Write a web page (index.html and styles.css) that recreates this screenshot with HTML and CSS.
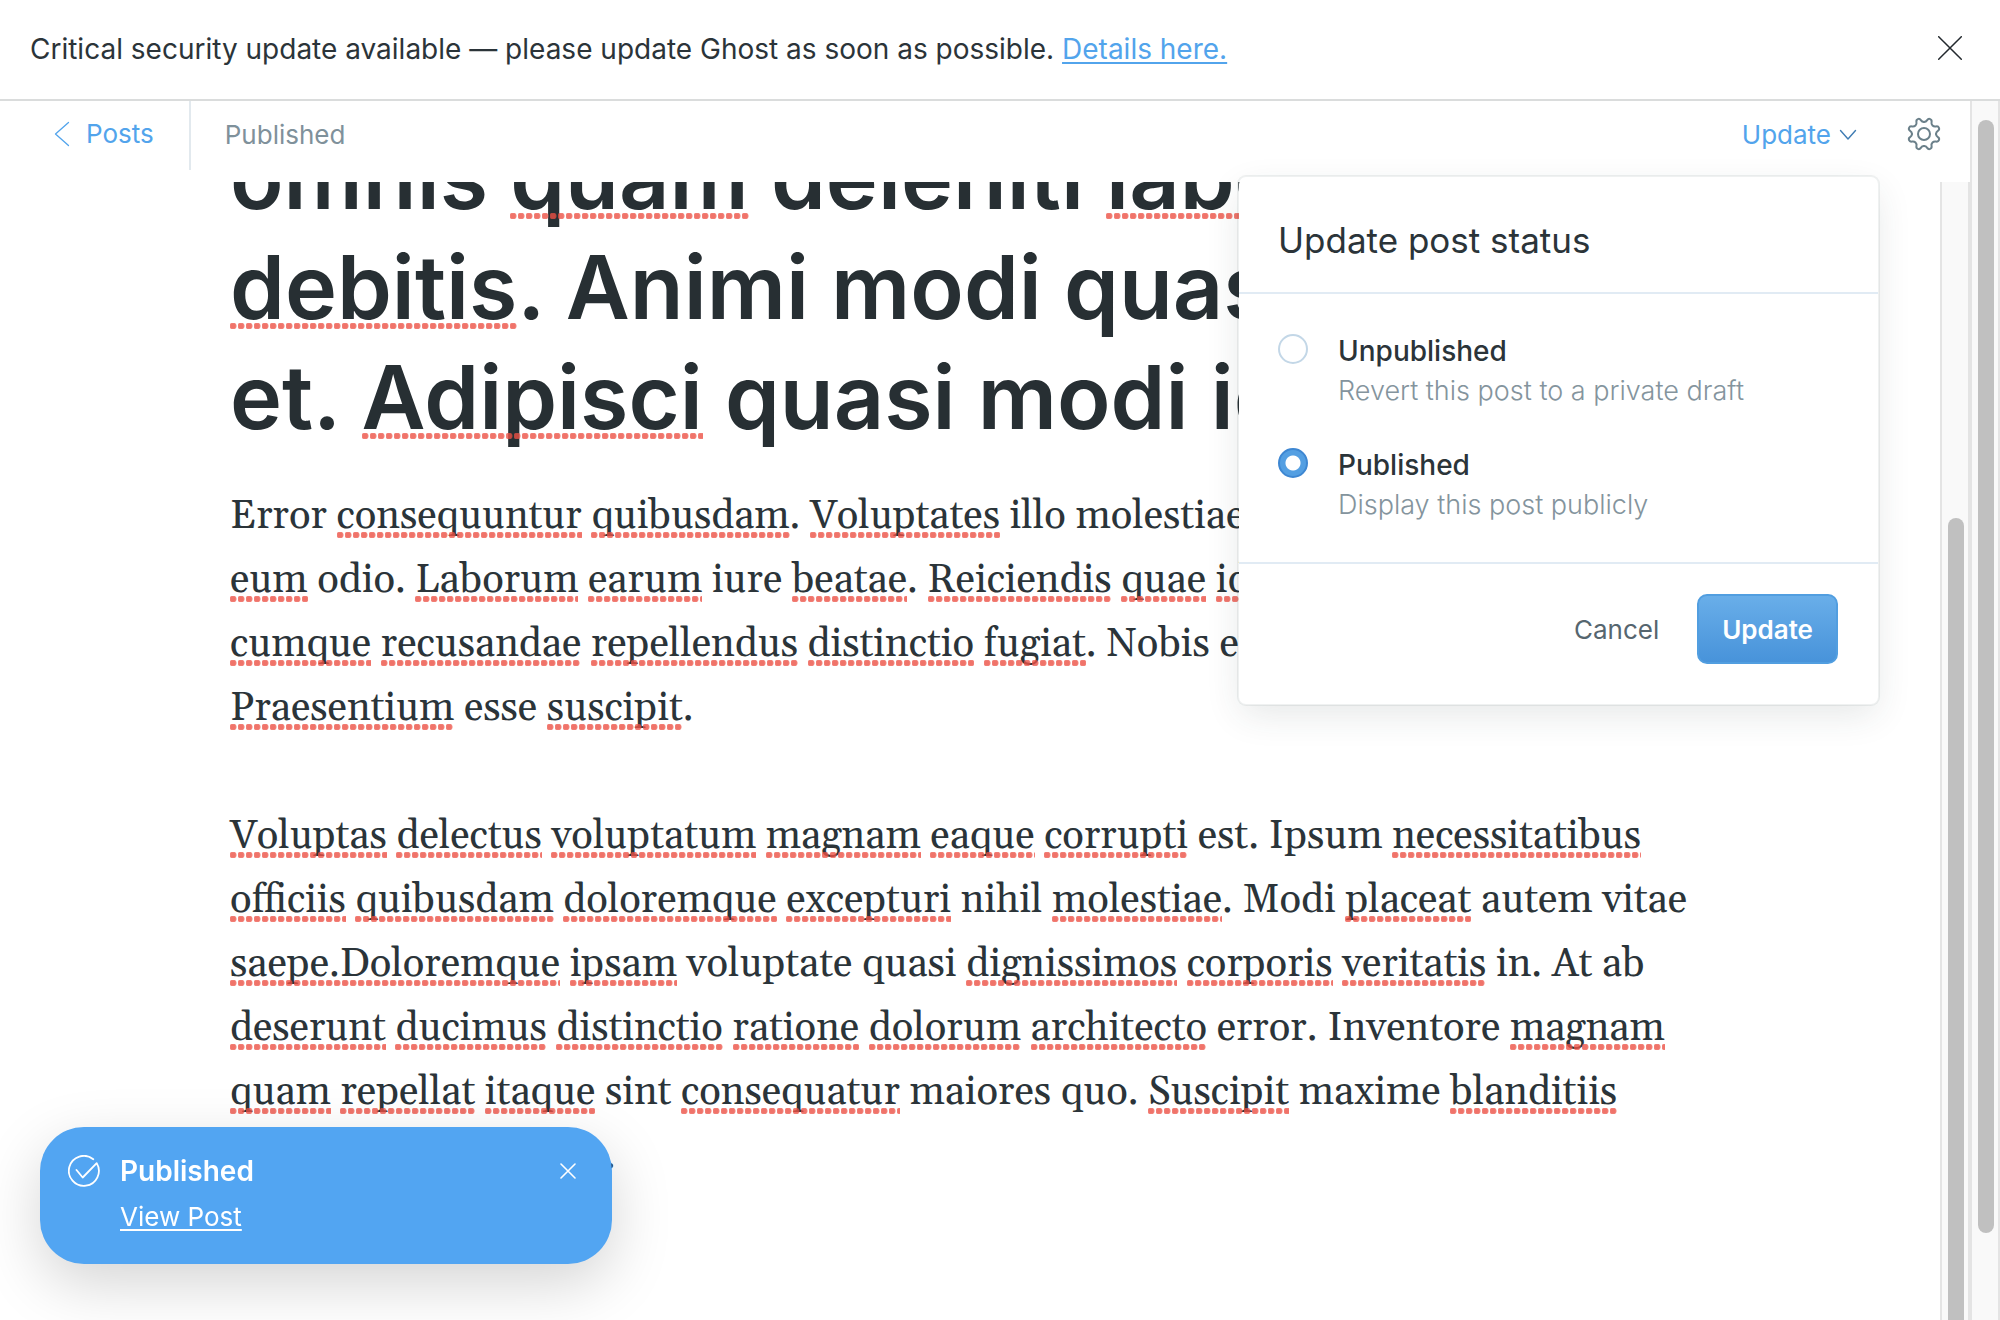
FILE: index.html
```html
<!DOCTYPE html>
<html lang="en">
<head>
<meta charset="utf-8">
<meta name="viewport" content="width=device-width, initial-scale=1">
<title>Editor - Ghost</title>
<link rel="stylesheet" href="styles.css">
</head>
<body>
<aside class="alert" role="alert">
  <p class="alert-text">Critical security update available — please update Ghost as soon as possible. <a href="#details">Details here.</a></p>
  <button class="icon-button" type="button" aria-label="Close">
    <svg width="24" height="24" viewBox="0 0 24 24" fill="none" stroke="#23292e" stroke-width="1.5" stroke-linecap="round"><path d="M.7.7l22.6 22.6M23.3.7L.7 23.3"/></svg>
  </button>
</aside>

<div class="app">
  <main class="screen">
    <header class="toolbar">
      <a class="back" href="#posts">
        <svg width="16" height="26" viewBox="0 0 16 26" fill="none" stroke="#52a4ec" stroke-width="1.3" stroke-linecap="round" stroke-linejoin="round"><path d="M14.500 1.500L1.500 13l13 11.500"/></svg>
        Posts
      </a>
      <span class="status">Published</span>
      <button class="update-trigger" type="button" aria-expanded="true">
        Update
        <svg width="18" height="12" viewBox="0 0 18 12" fill="none" stroke="#3f7cb3" stroke-width="1.4" stroke-linecap="round" stroke-linejoin="round"><path d="M1.500 1.500l7.500 8.500 7.500-8.500"/></svg>
      </button>
      <button class="icon-button" type="button" aria-label="Settings">
        <svg width="34" height="34" viewBox="-17 -17 34 34" fill="none" stroke="#6b808a" stroke-width="2" stroke-linecap="round">
          <circle r="6"/>
          <path id="q" d="M12.030 0Q12.030 2.010 13.870 3.190Q15.710 4.360 14.950 6.200Q14.190 8.030 12.060 7.560Q9.930 7.080 8.510 8.510Q7.080 9.930 7.560 12.060Q8.030 14.190 6.200 14.950Q4.360 15.710 3.190 13.870Q2.010 12.030 0 12.030"/>
          <use href="#q" transform="rotate(90)"/>
          <use href="#q" transform="rotate(180)"/>
          <use href="#q" transform="rotate(270)"/>
        </svg>
      </button>
    </header>

    <div class="editor">
      <article class="post" contenteditable="true" spellcheck="false">
        <h1>omnis <i>quam</i> deleniti <i>laborum</i><br><i>debitis</i>. Animi modi quasi<br>et. <i>Adipisci</i> quasi modi id</h1>
        <p>Error <i>consequuntur</i> <i>quibusdam</i>. <i>Voluptates</i> illo molestiae<br><i>eum</i> odio. <i>Laborum</i> <i>earum</i> iure <i>beatae</i>. <i>Reiciendis</i> <i>quae</i> <i>id</i><br><i>cumque</i> <i>recusandae</i> <i>repellendus</i> <i>distinctio</i> <i>fugiat</i>. Nobis et<br><i>Praesentium</i> esse <i>suscipit</i>.</p>
        <p><i>Voluptas</i> <i>delectus</i> <i>voluptatum</i> <i>magnam</i> <i>eaque</i> <i>corrupti</i> est. Ipsum <i>necessitatibus</i><br><i>officiis</i> <i>quibusdam</i> <i>doloremque</i> <i>excepturi</i> nihil <i>molestiae</i>. Modi <i>placeat</i> autem vitae<br><i>saepe.Doloremque</i> <i>ipsam</i> voluptate quasi <i>dignissimos</i> <i>corporis</i> <i>veritatis</i> in. At ab<br><i>deserunt</i> <i>ducimus</i> <i>distinctio</i> <i>ratione</i> <i>dolorum</i> <i>architecto</i> error. Inventore <i>magnam</i><br><i>quam</i> <i>repellat</i> <i>itaque</i> sint <i>consequatur</i> maiores quo. <i>Suscipit</i> maxime <i>blanditiis</i><br>dolor illam maiores a.</p>
      </article>
      <div class="scrollbar inner"><div class="thumb"></div></div>
    </div>

    <form class="popup">
      <h2>Update post status</h2>
      <div class="options">
        <div class="option">
          <input type="radio" name="status" id="unpublished">
          <label for="unpublished">Unpublished<small>Revert this post to a private draft</small></label>
        </div>
        <div class="option">
          <input type="radio" name="status" id="published" checked>
          <label for="published">Published<small>Display this post publicly</small></label>
        </div>
      </div>
      <footer>
        <button class="cancel" type="button">Cancel</button>
        <button class="submit" type="button">Update</button>
      </footer>
    </form>
  </main>
  <div class="scrollbar outer"><div class="thumb"></div></div>
</div>

<section class="toast" role="status">
  <svg width="32" height="32" viewBox="0 0 32 32" fill="none" stroke="#fff" stroke-width="1.8" stroke-linecap="round" stroke-linejoin="round"><path d="M8.500 15l6.200 7.500L28.700 8.100A15 15 0 1 1 25.300 4.200"/></svg>
  <div class="toast-body">
    <strong>Published</strong>
    <a href="#view">View Post</a>
  </div>
  <button class="icon-button" type="button" aria-label="Close notification">
    <svg width="16" height="16" viewBox="0 0 16 16" fill="none" stroke="#fff" stroke-width="1.6" stroke-linecap="round"><path d="M1 1l14 14M15 1L1 15"/></svg>
  </button>
</section>
</body>
</html>
```
FILE: styles.css
```css
* {
  box-sizing: border-box;
}

body {
  margin: 0;
  height: 100vh;
  display: flex;
  flex-direction: column;
  overflow: hidden;
  background: #fff;
  color: #2b3439;
  font: 26px/40px Inter, "Liberation Sans", sans-serif;
}

button {
  padding: 0;
  border: 0;
  background: none;
  color: inherit;
  font: inherit;
  cursor: pointer;
}

svg {
  display: block;
  flex: none;
}

/* Alert bar */
.alert {
  flex: none;
  display: flex;
  align-items: flex-start;
  justify-content: space-between;
  padding: 29px 38px 30px 30px;
  border-bottom: 2px solid #dadcdc;
  font-size: 28px;
}

.alert-text {
  margin: 0;
}

.alert .icon-button {
  margin-top: 7px;
}

.alert a {
  color: #52a4ec;
  text-decoration-thickness: 2px;
  text-underline-offset: 3px;
}

/* App frame */
.app {
  flex: 1;
  min-height: 0;
  display: flex;
}

.screen {
  position: relative;
  flex: 1;
  min-width: 0;
  display: flex;
  flex-direction: column;
}

.toolbar {
  flex: none;
  display: flex;
  align-items: flex-start;
  padding: 0 29px 12px 0;
}

.toolbar > :not(.back) {
  margin-top: 14px;
}

.back {
  display: flex;
  align-items: center;
  gap: 16px;
  padding: 13px 35px 16px 54px;
  border-right: 2px solid #e2e9ee;
  color: #52a4ec;
  text-decoration: none;
}

.status {
  flex: 1;
  padding-left: 34px;
  color: #7f919b;
}

.update-trigger {
  display: flex;
  align-items: center;
  gap: 8px;
  margin-right: 50px;
  color: #52a4ec;
}

.toolbar .icon-button {
  padding: 2px 0;
}

.editor {
  flex: 1;
  min-height: 0;
  display: flex;
  overflow: hidden;
}

.post {
  flex: 1;
  min-width: 0;
  padding: 0 230px;
  outline: 0;
}

.post h1 {
  margin: -60px 0 33px;
  color: #272f33;
  font-size: 88px;
  font-weight: 600;
  line-height: 110px;
}

.post p {
  margin: 0 0 64px;
  font-family: Gelasio, Georgia, "Liberation Serif", serif;
  font-size: 40px;
  line-height: 64px;
}

.post h1,
.post p {
  white-space: nowrap;
}

/* Misspelled word */
.post i {
  position: relative;
  font-style: normal;
}

.post i::after {
  content: "";
  position: absolute;
  left: 0;
  right: 0;
  bottom: 4px;
  height: 6px;
  background: radial-gradient(circle at 3px 3px, rgba(236, 80, 68, .8) 2px, rgba(236, 80, 68, .7) 3px, transparent 4px) 0 0 / 8px 6px;
}

.post h1 i::after {
  bottom: 11px;
}

/* Scrollbars */
.scrollbar {
  flex: none;
  width: 30px;
  padding-left: 6px;
  background: #f9f9f9;
  border: solid #e4e4e4;
  border-width: 0 2px;
}

.scrollbar .thumb {
  width: 16px;
  height: 100%;
  border-radius: 8px;
  background: #c0c0c0;
}

.scrollbar.outer {
  padding-top: 19px;
  padding-bottom: 87px;
}

.scrollbar.inner {
  padding-top: 336px;
}

.inner .thumb {
  height: 110%;
}

/* Status popup */
.popup {
  position: absolute;
  top: 74px;
  right: 90px;
  width: 643px;
  border: 2px solid rgba(30, 50, 60, .07);
  border-radius: 9px;
  background: #fff;
  background-clip: padding-box;
  box-shadow: 0 12px 36px -4px rgba(40, 60, 60, .12);
}

.popup h2 {
  margin: 0;
  padding: 40px 39px 29px;
  border-bottom: 2px solid #e1ebf4;
  font-size: 35px;
  font-weight: 400;
  line-height: 46px;
}

.options {
  display: flex;
  flex-direction: column;
  gap: 36px;
  padding: 38px 39px;
  border-bottom: 2px solid #e1ebf4;
}

.option {
  display: flex;
  gap: 30px;
}

.option input {
  flex: none;
  appearance: none;
  width: 30px;
  height: 30px;
  margin: 2px 0 0;
  border: 2px solid #c3d7e7;
  border-radius: 50%;
}

.option input:checked {
  border-color: #3e87d2;
  background: radial-gradient(circle, #fff 7px, #549fe2 8px);
}

.option label {
  font-size: 28px;
  font-weight: 500;
  line-height: 39px;
}

.option small {
  display: block;
  color: #84949d;
  font-size: 27px;
  font-weight: 300;
}

.popup footer {
  display: flex;
  justify-content: flex-end;
  gap: 38px;
  padding: 30px 40px 40px;
}

.cancel {
  padding-top: 2px;
  color: #56666f;
}

.submit {
  padding: 14px 23px 12px;
  border: 2px solid #519ee0;
  border-radius: 10px;
  background: linear-gradient(#69aee9, #4893da);
  color: #fff;
  font-weight: 600;
}

/* Notification */
.toast {
  position: fixed;
  left: 40px;
  bottom: 56px;
  width: 572px;
  display: flex;
  align-items: flex-start;
  gap: 20px;
  padding: 28px 36px 25px 28px;
  border-radius: 44px;
  background: #52a5f2;
  box-shadow: 0 20px 60px rgba(0, 0, 0, .17);
  color: #fff;
}

.toast-body {
  flex: 1;
  display: flex;
  flex-direction: column;
  align-items: flex-start;
  gap: 8px;
}

.toast strong {
  font-size: 28px;
  font-weight: 600;
  line-height: 32px;
}

.toast a {
  color: #fff;
  line-height: 44px;
  text-decoration-thickness: 2px;
  text-underline-offset: 3px;
}

.toast .icon-button {
  margin-top: 8px;
}
```
